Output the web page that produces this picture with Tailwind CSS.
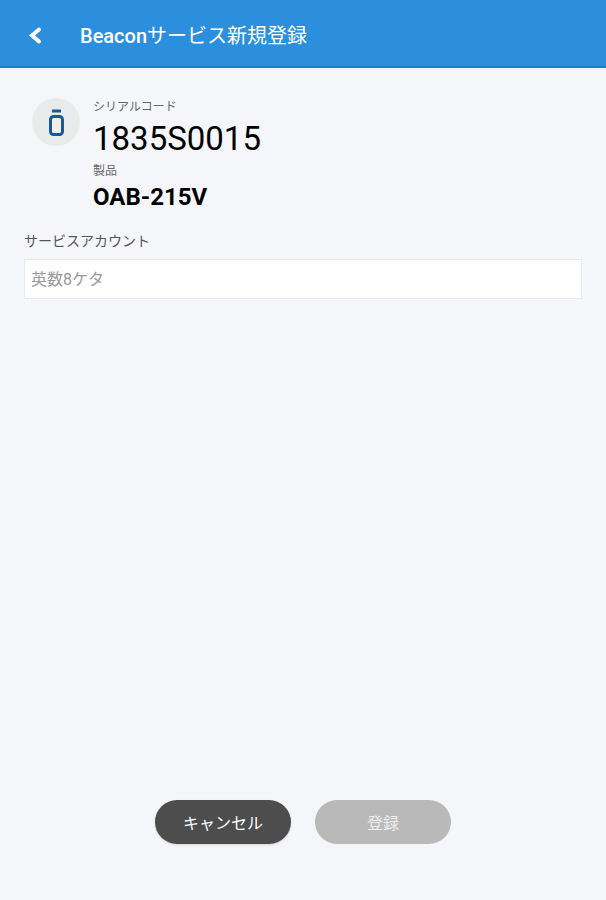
<!DOCTYPE html>
<html lang="ja">
<head>
    <meta charset="UTF-8">
    <meta name="viewport" content="width=device-width, initial-scale=1.0">
    <title>Beaconサービス新規登録</title>
    <script src="https://cdn.jsdelivr.net/npm/@tailwindcss/browser@4"></script>
</head>
<body class="min-h-screen flex flex-col bg-[#f5f6fa] text-black font-['Roboto','Noto_Sans_CJK_JP',sans-serif]">
    <header class="flex items-center h-17 pt-1.5 px-6 bg-[#2c8fde] border-b-2 border-[#1481cc] text-white">
        <a href="#" aria-label="戻る" class="mr-8">
            <svg class="w-6 h-6" viewBox="0 0 24 24" fill="none" stroke="currentColor" stroke-width="4" stroke-linecap="round">
                <path d="M15 5.5 L8 11.5 L15 17.5"/>
            </svg>
        </a>
        <h1 class="text-xl font-medium">Beacon<span class="font-normal">サービス新規登録</span></h1>
    </header>

    <main class="grow flex flex-col px-6 pt-7">
        <!-- Device info -->
        <section class="flex gap-3 px-2">
            <div class="flex items-center justify-center shrink-0 w-12 h-12 mt-0.5 rounded-full bg-[#e9eaea]">
                <svg class="w-6 h-8" viewBox="0 0 24 32" fill="none">
                    <rect x="8" y="3.5" width="9" height="3" fill="#155a9c"/>
                    <rect x="6.5" y="10.5" width="12" height="18" rx="3" fill="#f1efe6" stroke="#155a9c" stroke-width="3"/>
                </svg>
            </div>
            <dl class="pt-px pl-px">
                <dt class="text-xs leading-5 text-[#666666]">シリアルコード</dt>
                <dd class="text-[33px] leading-11">1835S0015</dd>
                <dt class="text-xs leading-5 text-[#666666]">製品</dt>
                <dd class="text-2xl leading-8 font-bold">OAB-215V</dd>
            </dl>
        </section>

        <!-- Service account -->
        <form id="register-form" class="flex flex-col mt-4.5">
            <label for="account" class="mb-2 text-sm text-[#555555]">サービスアカウント</label>
            <input id="account" type="text" maxlength="8" placeholder="英数8ケタ" class="w-full h-10 px-1.5 bg-white border border-[#e9eaec] placeholder:text-[#999999]"/>
        </form>

        <div class="flex justify-center gap-6 mt-auto pb-14">
            <button type="button" class="w-34 h-11 pt-1 rounded-full bg-[#4d4d4d] text-white shadow-sm">キャンセル</button>
            <button type="submit" form="register-form" disabled class="w-34 h-11 pt-1 rounded-full bg-[#b9b9b9] text-[#eeeeee]">登録</button>
        </div>
    </main>
</body>
</html>
